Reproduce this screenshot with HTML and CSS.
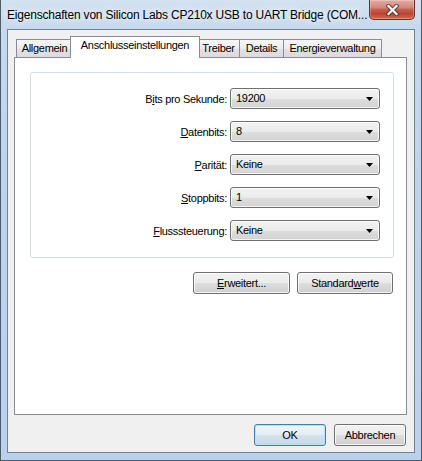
FILE: index.html
```html
<!DOCTYPE html>
<html lang="de">
<head>
<meta charset="utf-8">
<title>Eigenschaften von Silicon Labs CP210x USB to UART Bridge</title>
<link rel="stylesheet" href="styles.css">
</head>
<body>
<div class="window">
  <div class="titlebar">
    <span class="title">Eigenschaften von Silicon Labs CP210x USB to UART Bridge (COM...</span>
    <div class="close" aria-label="Schließen">
      <svg width="13" height="12" viewBox="0 0 13 12">
        <path d="M2.5 2 L10.5 10 M10.5 2 L2.5 10" stroke="#2a2a2a" stroke-opacity="0.7" stroke-width="4.2" stroke-linecap="square" fill="none"/>
        <path d="M2.5 2 L10.5 10 M10.5 2 L2.5 10" stroke="#ffffff" stroke-width="2.2" stroke-linecap="square" fill="none"/>
      </svg>
    </div>
  </div>
  <div class="client">
    <div class="tabs">
      <div class="tab t-allg">Allgemein</div>
      <div class="tab t-ansch selected">Anschlusseinstellungen</div>
      <div class="tab t-treib">Treiber</div>
      <div class="tab t-det">Details</div>
      <div class="tab t-energ">Energieverwaltung</div>
    </div>
    <div class="panel">
      <div class="group">
        <div class="row"><span class="label">B<u>i</u>ts pro Sekunde:</span><div class="combo"><span class="value">19200</span><svg class="arrow" width="7" height="4" viewBox="0 0 7 4"><polygon points="0,0 7,0 3.5,4" fill="#000"/></svg></div></div>
        <div class="row"><span class="label"><u>D</u>atenbits:</span><div class="combo"><span class="value">8</span><svg class="arrow" width="7" height="4" viewBox="0 0 7 4"><polygon points="0,0 7,0 3.5,4" fill="#000"/></svg></div></div>
        <div class="row"><span class="label"><u>P</u>arität:</span><div class="combo"><span class="value">Keine</span><svg class="arrow" width="7" height="4" viewBox="0 0 7 4"><polygon points="0,0 7,0 3.5,4" fill="#000"/></svg></div></div>
        <div class="row"><span class="label"><u>S</u>toppbits:</span><div class="combo"><span class="value">1</span><svg class="arrow" width="7" height="4" viewBox="0 0 7 4"><polygon points="0,0 7,0 3.5,4" fill="#000"/></svg></div></div>
        <div class="row"><span class="label"><u>F</u>lusssteuerung:</span><div class="combo"><span class="value">Keine</span><svg class="arrow" width="7" height="4" viewBox="0 0 7 4"><polygon points="0,0 7,0 3.5,4" fill="#000"/></svg></div></div>
      </div>
      <div class="actions">
        <button class="btn b-erw"><u>E</u>rweitert...</button>
        <button class="btn b-std">Standard<u>w</u>erte</button>
      </div>
    </div>
    <div class="footer">
      <button class="btn b-foot default">OK</button>
      <button class="btn b-foot">Abbrechen</button>
    </div>
  </div>
</div>
</body>
</html>
```

FILE: styles.css
```css
* { box-sizing: border-box; }
html, body { margin: 0; padding: 0; }
body {
  width: 422px;
  height: 461px;
  overflow: hidden;
  font-family: "Liberation Sans", Arial, sans-serif;
  font-size: 11px;
  letter-spacing: -0.3px;
  color: #000;
  background: #b9d1ea;
}
u { text-decoration: underline; text-underline-offset: 1px; }

.window {
  width: 422px;
  height: 461px;
  border: 1px solid #4e5b6a;
  border-top: 0;
  background: linear-gradient(180deg, #d4e2f1 0px, #c6d9ee 28px, #bcd3ec 200px, #b9d1ea 100%);
  display: flex;
  flex-direction: column;
}

.titlebar {
  height: 29px;
  flex: none;
  display: flex;
  align-items: flex-start;
  justify-content: space-between;
  padding: 0 6px;
}
.title {
  font-size: 12px;
  letter-spacing: -0.2px;
  line-height: 16px;
  padding-top: 7px;
  white-space: nowrap;
  text-shadow: 0 0 6px #ffffff, 0 0 10px rgba(255,255,255,0.8);
}
.close {
  width: 46px;
  height: 20px;
  flex: none;
  border: 1px solid #6e2c25;
  border-top: 0;
  border-radius: 0 0 5px 5px;
  background: linear-gradient(180deg, #e3aca3 0%, #d4857a 40%, #c85e4f 50%, #bb4432 72%, #d46a52 100%);
  box-shadow: inset 0 0 0 1px rgba(255,255,255,0.25);
  display: flex;
  align-items: center;
  justify-content: center;
}

.client {
  margin-left: 6px;
  width: 408px;
  height: 424px;
  flex: none;
  border: 1px solid #6f8296;
  background: #f0f0f0;
  display: flex;
  flex-direction: column;
}

.tabs {
  margin-top: 6px;
  height: 22px;
  margin-bottom: -1px;
  padding-left: 9px;
  display: flex;
  align-items: flex-end;
  position: relative;
  z-index: 1;
}
.tab {
  height: 18px;
  margin-bottom: 1px;
  margin-left: -1px;
  border: 1px solid #898c95;
  border-bottom: 0;
  background: linear-gradient(180deg, #f6f6f6 0%, #ececec 50%, #e1e1e1 51%, #dcdcdc 100%);
  text-align: center;
  line-height: 17px;
  white-space: nowrap;
}
.t-allg { width: 57px; }
.t-ansch { width: 130px; }
.t-treib { width: 43px; }
.t-det { width: 45px; }
.t-energ { width: 99px; }
.tab.selected {
  height: 22px;
  margin-bottom: 0;
  margin-left: -3px;
  margin-right: -2px;
  background: #ffffff;
  position: relative;
  z-index: 2;
}

.panel {
  margin-left: 6px;
  width: 393px;
  height: 358px;
  flex: none;
  border: 1px solid #898c95;
  background: #ffffff;
  padding: 14px 0 0 15px;
}

.group {
  width: 364px;
  height: 186px;
  border: 1px solid #d5dfe5;
  border-radius: 3px;
  padding: 15px 13px 0 0;
  display: flex;
  flex-direction: column;
  gap: 12px;
}
.row {
  height: 21px;
  display: flex;
  align-items: center;
}
.label {
  width: 196px;
  text-align: right;
  white-space: nowrap;
}
.combo {
  margin-left: 3px;
  width: 150px;
  height: 21px;
  border: 1px solid #707070;
  border-radius: 3px;
  background: linear-gradient(180deg, #f3f3f3 0%, #ebebeb 50%, #dddddd 51%, #d3d3d3 100%);
  box-shadow: inset 0 0 0 1px rgba(255,255,255,0.75);
  display: flex;
  align-items: center;
  justify-content: space-between;
  padding: 0 6px 0 5px;
}
.value { line-height: 19px; }
.arrow { display: block; flex: none; }

.actions {
  width: 364px;
  margin-top: 14px;
  padding-right: 1px;
  display: flex;
  justify-content: flex-end;
  gap: 7px;
}

.btn {
  height: 22px;
  padding: 0;
  margin: 0;
  border: 1px solid #707070;
  border-radius: 3px;
  background: linear-gradient(180deg, #f2f2f2 0%, #ebebeb 50%, #dddddd 51%, #cfcfcf 100%);
  box-shadow: inset 0 0 0 1px rgba(255,255,255,0.75);
  font-family: inherit;
  font-size: 11px;
  letter-spacing: -0.3px;
  color: #000;
  line-height: 19px;
  text-align: center;
}
.b-erw { width: 97px; }
.b-std { width: 96px; }

.footer {
  margin-top: 9px;
  padding-right: 8px;
  display: flex;
  justify-content: flex-end;
  gap: 8px;
}
.b-foot { width: 72px; }
.btn.default {
  border-color: #3c7fb1;
  background: linear-gradient(180deg, #eef5fa 0%, #e4edf4 50%, #d5e2ec 51%, #c8d8e5 100%);
  box-shadow: inset 0 0 0 1px #b9e2f7;
}
```
